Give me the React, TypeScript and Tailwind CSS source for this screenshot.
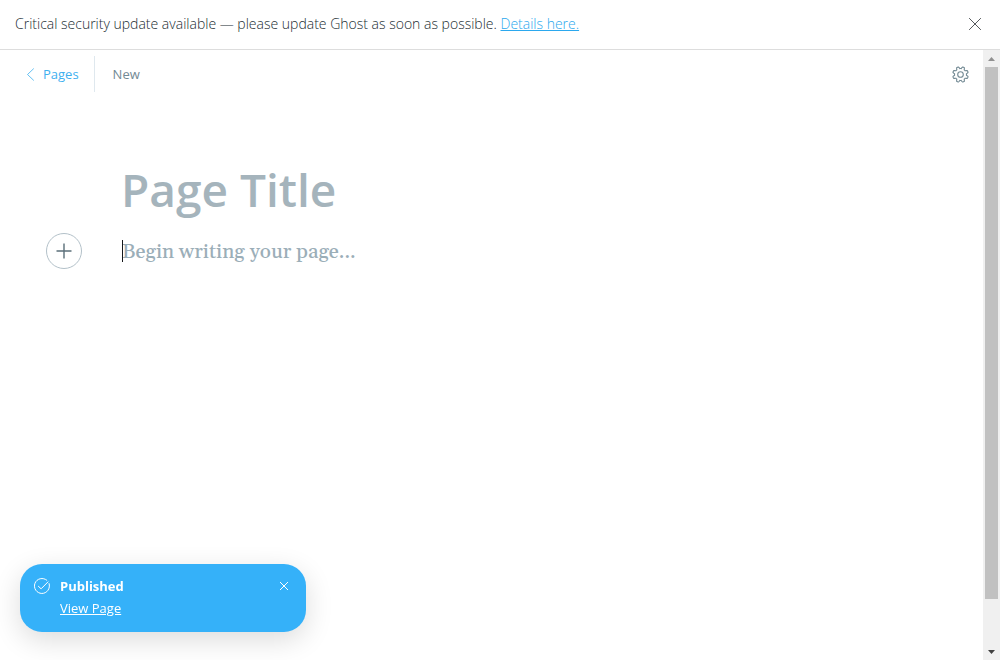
import React from "react";

function CloseIcon({ className }: { className: string }) {
  return (
    <svg viewBox="0 0 12 12" className={className} fill="none" stroke="currentColor" aria-hidden="true">
      <path d="M.4.4l11.2 11.2M11.6.4L.4 11.6" strokeLinecap="round" vectorEffect="non-scaling-stroke" />
    </svg>
  );
}

function GearIcon() {
  const points: string[] = [];
  const teeth = 8;
  for (let i = 0; i < 160; i++) {
    const a = (i / 160) * Math.PI * 2;
    const wave = Math.max(-1, Math.min(1, 1.7 * Math.cos(teeth * (a - Math.PI / 8))));
    const r = 6.9 + 0.95 * wave;
    points.push(`${(8.5 + r * Math.cos(a)).toFixed(2)} ${(8.5 + r * Math.sin(a)).toFixed(2)}`);
  }
  return (
    <svg viewBox="0 0 17 17" className="size-[17px]" fill="none" stroke="currentColor" strokeWidth="1.1" aria-hidden="true">
      <path d={`M${points.join("L")}Z`} strokeLinejoin="round" />
      <circle cx="8.5" cy="8.5" r="2.8" />
    </svg>
  );
}

function UpdateBanner() {
  return (
    <aside className="flex h-[50px] shrink-0 items-center justify-between border-b border-[#dddddd] pr-[18px] pb-px pl-[15px] text-[14px] leading-5 font-[350] text-[#222d33]">
      <p>
        Critical security update available — please update Ghost as soon as possible.{" "}
        <a href="#details" className="text-[#2ba8ee] underline">
          Details here.
        </a>
      </p>
      <button type="button" aria-label="Dismiss" className="flex size-[14px] items-center justify-center text-[#55595c]">
        <CloseIcon className="size-3" />
      </button>
    </aside>
  );
}

function EditorHeader() {
  return (
    <header className="flex items-center justify-between pt-[6px] pr-[14px] pl-[26px] text-[13px] leading-5">
      <nav className="flex items-center">
        <a href="#pages" className="flex h-9 items-center gap-2 border-r border-[#dfe8ee] pr-[15px] text-[#3eb0ef]">
          <svg viewBox="0 0 9 13" className="h-[13px] w-[9px]" fill="none" stroke="currentColor" aria-hidden="true">
            <path d="M7.5.8L1.5 6.5l6 5.7" strokeWidth=".8" strokeLinecap="round" />
          </svg>
          Pages
        </a>
        <span className="pl-[18px] text-[#738a94]">New</span>
      </nav>
      <button type="button" aria-label="Settings" className="text-[#738a94]">
        <GearIcon />
      </button>
    </header>
  );
}

function Editor() {
  return (
    <section className="flex flex-col gap-3 pt-[65px] pr-[122px] pl-[46px]">
      <input
        type="text"
        aria-label="Page title"
        placeholder="Page Title"
        className="ml-[75px] h-16 min-w-0 bg-transparent text-[46px] leading-[64px] font-semibold text-[#15171a] outline-none placeholder:text-[#a5b4bc]"
      />
      <div className="flex items-start gap-10">
        <button
          type="button"
          aria-label="Add a card"
          className="flex size-9 shrink-0 items-center justify-center rounded-full border border-[#b3c1c9] text-[#5b6f79]"
        >
          <svg viewBox="0 0 16 16" className="size-4" fill="none" stroke="currentColor" aria-hidden="true">
            <path d="M8 .5v15M.5 8h15" strokeWidth="1.4" />
          </svg>
        </button>
        <div className="relative flex-1">
          <textarea
            rows={1}
            aria-label="Page content"
            placeholder="Begin writing your page..."
            className="block h-9 w-full resize-none bg-transparent font-['Georgia','Gelasio','Liberation_Serif',serif] text-[20px] leading-[38px] font-medium text-[#15171a] outline-none placeholder:text-[#9baeb8]"
          />
          <span className="absolute top-[7px] left-0 h-[22px] w-px bg-[#15171a]" />
        </div>
      </div>
    </section>
  );
}

function ScrollTrack() {
  return (
    <div aria-hidden="true" className="flex w-[17px] shrink-0 flex-col bg-[#f0f0f0] px-[2px]">
      <div className="flex h-[17px] items-center justify-center">
        <svg viewBox="0 0 7 4" className="h-1 w-[7px]" fill="#909090">
          <path d="M0 4L3.5 0 7 4Z" />
        </svg>
      </div>
      <div className="grow-12 bg-[#c1c1c1]" />
      <div className="grow" />
      <div className="flex h-[17px] items-center justify-center">
        <svg viewBox="0 0 7 4" className="h-1 w-[7px]" fill="#404040">
          <path d="M0 0L3.5 4 7 0Z" />
        </svg>
      </div>
    </div>
  );
}

function Toast() {
  return (
    <div
      role="status"
      className="fixed bottom-7 left-5 flex h-[68px] w-[286px] items-start rounded-[22px] bg-[#35b1f9] pt-[11px] pr-[17px] pl-[14px] text-[13px] leading-[22px] text-white shadow-[0_8px_28px_rgba(0,0,0,0.14)]"
    >
      <svg viewBox="0 0 16 16" className="mt-[3px] size-4 shrink-0" fill="none" stroke="currentColor" strokeWidth="1" strokeLinecap="round" strokeLinejoin="round" aria-hidden="true">
        <path d="M15.1 5.6A7.5 7.5 0 1 1 12.8 2.2" />
        <path d="M4.4 8.3l2.7 2.5L14 3.9" />
      </svg>
      <div className="flex flex-1 flex-col items-start pl-[10px]">
        <strong className="font-bold">Published</strong>
        <a href="#view" className="underline">
          View Page
        </a>
      </div>
      <button type="button" aria-label="Close" className="mt-[6px] flex size-[10px] items-center justify-center">
        <CloseIcon className="size-2" />
      </button>
    </div>
  );
}

export default function App() {
  return (
    <div className="flex min-h-screen flex-col bg-white font-['Open_Sans','Noto_Sans',sans-serif]">
      <UpdateBanner />
      <div className="flex flex-1">
        <main className="min-w-0 flex-1">
          <EditorHeader />
          <Editor />
        </main>
        <ScrollTrack />
      </div>
      <Toast />
    </div>
  );
}
